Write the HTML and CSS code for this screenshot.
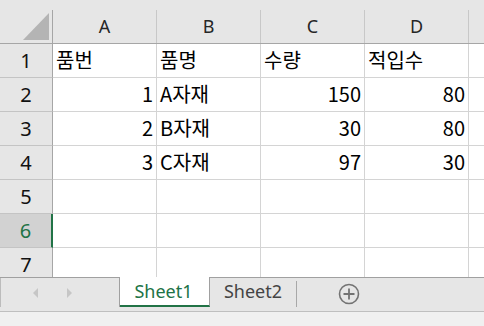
FILE: index.html
```html
<!DOCTYPE html>
<html>
	<head>
		<meta charset="UTF-8">
		<title>Sheet1</title>
		<link rel="stylesheet" href="styles.css">
	</head>
	<body>
		<div class="sheet">
			<div class="colhead">
				<div class="corner">
					<svg width="26" height="27" viewBox="0 0 26 27"><polygon points="26,0 26,27 0,27" fill="#b4b4b4"/></svg>
				</div>
				<div class="ch">A</div>
				<div class="ch">B</div>
				<div class="ch">C</div>
				<div class="ch">D</div>
				<div class="ch"></div>
			</div>
			<div class="grid">
				<div class="rh">1</div>
				<div class="c">품번</div>
				<div class="c">품명</div>
				<div class="c">수량</div>
				<div class="c">적입수</div>
				<div class="c"></div>

				<div class="rh">2</div>
				<div class="c num">1</div>
				<div class="c">A자재</div>
				<div class="c num">150</div>
				<div class="c num">80</div>
				<div class="c"></div>

				<div class="rh">3</div>
				<div class="c num">2</div>
				<div class="c">B자재</div>
				<div class="c num">30</div>
				<div class="c num">80</div>
				<div class="c"></div>

				<div class="rh">4</div>
				<div class="c num">3</div>
				<div class="c">C자재</div>
				<div class="c num">97</div>
				<div class="c num">30</div>
				<div class="c"></div>

				<div class="rh">5</div>
				<div class="c"></div>
				<div class="c"></div>
				<div class="c"></div>
				<div class="c"></div>
				<div class="c"></div>

				<div class="rh sel">6</div>
				<div class="c"></div>
				<div class="c"></div>
				<div class="c"></div>
				<div class="c"></div>
				<div class="c"></div>

				<div class="rh">7</div>
				<div class="c"></div>
				<div class="c"></div>
				<div class="c"></div>
				<div class="c"></div>
				<div class="c"></div>
			</div>
		</div>
		<div class="tabbar">
			<div class="nav">
				<span class="arrow left"></span>
				<span class="arrow right"></span>
			</div>
			<div class="tab active">Sheet1</div>
			<div class="tab">Sheet2</div>
			<div class="sep"></div>
			<div class="add">
				<svg width="22" height="22" viewBox="0 0 22 22">
					<circle cx="11" cy="11" r="9.5" fill="none" stroke="#737373" stroke-width="1.6"/>
					<path d="M11 5.5v11M5.5 11h11" stroke="#737373" stroke-width="1.8"/>
				</svg>
			</div>
		</div>
		<div class="status"></div>
	</body>
</html>
```

FILE: styles.css
```css
*{padding: 0;margin: 0;box-sizing: border-box;}
body{width:484px;height:326px;overflow: hidden;background: #fff;font-family: "Noto Sans CJK KR","Noto Sans",sans-serif;color:#000;}

.sheet{height:277px;overflow: hidden;}
.colhead{display: grid;grid-template-columns: 53px repeat(5,104px);background: #e6e6e6;padding-top: 10px;border-bottom: 1px solid #a6a6a6;height:44px;}
.corner{display: flex;justify-content: flex-end;align-items: flex-end;padding: 0 3px 3px 0;border-right: 1px solid #a6a6a6;}
.ch{height:33px;line-height: 33px;text-align: center;font-family: "Noto Sans",sans-serif;font-size: 18px;color:#262626;border-right: 1px solid #c8c8c8;}

.grid{display: grid;grid-template-columns: 53px repeat(5,104px);grid-auto-rows: 34px;}
.rh{background: #e6e6e6;border-right: 1px solid #a6a6a6;border-bottom: 1px solid #c4c4c4;text-align: center;font-family: "Noto Sans",sans-serif;font-size: 20px;line-height: 33px;color:#111;}
.rh.sel{background: #d2d2d2;color:#217346;border-right: 2px solid #217346;}
.c{border-right: 1px solid #d4d4d4;border-bottom: 1px solid #d4d4d4;font-size: 20px;line-height: 31px;padding: 0 3px;white-space: nowrap;}
.num{text-align: right;}

.tabbar{display: flex;align-items: flex-start;height:35px;background: #e6e6e6;border-top: 1px solid #a0a0a0;border-bottom: 1px solid #bfbfbf;font-family: "Noto Sans",sans-serif;font-size: 18px;}
.nav{width:120px;height:29px;border-left: 1px solid #bcbcbc;border-right: 1px solid #a0a0a0;display: flex;align-items: center;padding-left: 32px;gap: 29px;}
.arrow{width:0;height:0;border-top: 5px solid transparent;border-bottom: 5px solid transparent;}
.arrow.left{border-right: 5px solid #c6c6c6;}
.arrow.right{border-left: 5px solid #c6c6c6;}
.tab{width:86px;height:29px;line-height: 27px;text-align: center;color:#444;}
.tab.active{width:90px;height:30px;margin-top: -1px;background: #fff;color:#217346;border-right: 1px solid #a0a0a0;border-bottom: 2px solid #217346;line-height: 28px;padding-right: 2px;}
.sep{width:1px;height:26px;margin-top: 3px;background: #a8a8a8;}
.add{margin-left: 41px;margin-top: 5px;width:22px;height:22px;}

.status{height:14px;background: #f0f0f0;}
```
